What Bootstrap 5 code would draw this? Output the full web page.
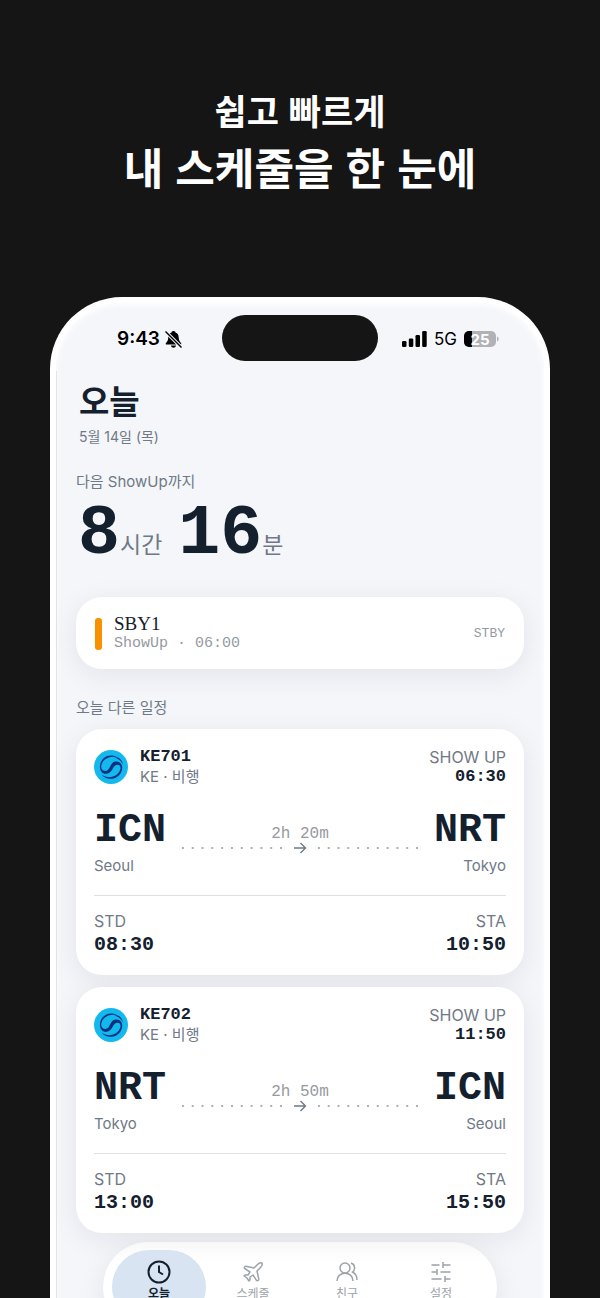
<!DOCTYPE html>
<html lang="ko">
<head>
<meta charset="utf-8">
<meta name="viewport" content="width=device-width, initial-scale=1">
<title>오늘</title>
<link href="https://cdn.jsdelivr.net/npm/bootstrap@5.3.0/dist/css/bootstrap.min.css" rel="stylesheet">
<style>
  :root { --ink: #14202e; --muted: #707986; --faint: #969a9f; }
  body { background: #151515; color: var(--ink); font-family: Inter, "Noto Sans CJK KR", sans-serif; font-size: 15px; line-height: 20px; }
  .stage { height: 100vh; padding-top: 84px; }
  .promo { font-family: "Noto Sans CJK KR", sans-serif; font-weight: 700; margin-bottom: 101px; }
  .promo-top { font-size: 35px; line-height: 52px; }
  .promo-main { font-size: 43px; line-height: 60px; }
  .mono { font-family: "Liberation Mono", monospace; }
  .muted { color: var(--muted); }
  .phone { margin: 0 50px; border: 6px solid #fff; border-bottom: 0; border-radius: 72px 72px 0 0; background: #f4f6fa; box-shadow: inset 0 2px 6px #fff; padding-top: 12px; }
  .status { display: grid; grid-template-columns: 1fr 156px 1fr; align-items: center; color: #000; }
  .island { height: 46px; border-radius: 23px; background: #151515; }
  .clock { font-size: 19px; font-weight: 600; padding: 2px 0 0 61px; gap: 4px; }
  .signal { font-size: 17px; padding: 2px 45px 0 0; gap: 7px; }
  .content { border-left: 1px solid #e0e3e8; padding: 9px 20px 0 19px; margin-top: 10px; }
  .page-title { font-family: "Noto Sans CJK KR", sans-serif; font-size: 33px; line-height: 40px; font-weight: 700; margin: 0 0 7px 3px; }
  .date { font-size: 14px; margin: 0 0 24px 3px; }
  .section-label { font-size: 15px; line-height: 20px; font-weight: 400; margin: 0; padding-top: 1px; }
  .countdown { height: 80px; line-height: 80px; margin: 3px 0 22px 2px; }
  .digits { font-size: 70px; font-weight: 700; }
  .unit { font-size: 23px; }
  .panel { background: #fff; border-radius: 26px; box-shadow: 0 6px 28px rgba(20, 30, 40, .08); }
  .standby { height: 72px; padding: 2px 19px 0; margin-bottom: 28px; }
  .stripe { width: 7px; height: 32px; border-radius: 3px; background: #f79100; margin-right: 12px; }
  .duty { font-family: "Liberation Serif", serif; font-size: 19px; }
  .duty-time { font-size: 15px; color: var(--faint); }
  .duty-tag { font-size: 13px; color: var(--faint); }
  .flights { gap: 12px; margin-top: 11px; }
  .flight { padding: 18px; }
  .flight-no, .show-time { font-size: 17px; font-weight: 700; }
  .caps { font-size: 16px; }
  .route { display: grid; grid-template-columns: 74px 1fr 74px; column-gap: 10px; margin-top: 22px; }
  .airport { font-size: 40px; line-height: 44px; font-weight: 700; }
  .city { margin-top: 3px; }
  .duration { font-size: 16px; line-height: 20px; color: var(--faint); margin-top: 15px; }
  .track { height: 8px; gap: 7px; }
  .dots { height: 2px; background: radial-gradient(circle, #a9afb6 1px, transparent 1px) 0 0 / 10px 2px round; }
  .times { border-top: 1px solid #dfe0e2; margin-top: 19px; padding-top: 15px; }
  .time { font-size: 20px; line-height: 24px; font-weight: 700; margin-top: 2px; }
  .tabs { margin: 9px 27px 0; padding: 8px 9px; border-radius: 46px; height: 90px; }
  .tab { border: 0; background: none; padding: 10px 0 0; height: 74px; border-radius: 37px; color: #9da3aa; font-size: 12px; line-height: 16px; }
  .tab svg { margin-bottom: 2px; }
  .tab.active { background: #d8e4f2; color: var(--ink); font-weight: 700; }
</style>
</head>
<body>
<svg class="d-none">
  <symbol id="airline" viewBox="0 0 34 34">
    <circle cx="17" cy="17" r="17" fill="#12b8ee"/>
    <path d="M6 15.500C7 7 16 2.500 24 7.500C16.500 5 9 8.500 7.400 15C6.500 19 8.800 21 11.500 21C16.500 21 15.500 12.300 21.500 11.600C27.500 11 30 17 27 22.500C23.500 29.500 13 31.500 7.500 24.500C13.500 29 21 27.500 24.800 22.500C28 18 26.500 14.500 23 14.800C18.500 15.300 19 23 12.500 23.800C8 24.200 5.500 20.500 6 15.500ZM24 7.500C27 9 28.500 11.500 28.700 14.500C27.500 11.500 25 8.500 20 7.500Z" fill="#05317f"/>
  </symbol>
  <symbol id="arrow" viewBox="0 0 14 14"><path d="M1 7H12M7.500 2L12.500 7L7.500 12" fill="none" stroke="#707986" stroke-width="1.400"/></symbol>
</svg>
<div class="stage d-flex flex-column overflow-hidden">
  <header class="promo text-center text-white">
    <div class="promo-top">쉽고 빠르게</div>
    <div class="promo-main">내 스케줄을 한 눈에</div>
  </header>
  <div class="phone flex-grow-1">
    <div class="status">
      <div class="clock d-flex align-items-center">9:43
        <svg width="19" height="19" viewBox="0 0 19 19" aria-hidden="true"><path d="M9.500 1C7.800 1 7.600 2 7.600 2.400C4.500 3.500 4.300 6 4.200 8.500C4 11 2.800 12 1.800 13.300V14.400H17.200V13.300C16.200 12 15 11 14.800 8.500C14.700 6 14.500 3.500 11.400 2.400C11.400 2 11.200 1 9.500 1ZM7 15.400C7.300 18.400 11.700 18.400 12 15.400Z"/><path d="M1.500 1.500L17.500 17.500" stroke="#f4f6fb" stroke-width="3.400"/><path d="M1.500 1.500L17.500 17.500" stroke="#000" stroke-width="1.400"/></svg>
      </div>
      <div class="island"></div>
      <div class="signal d-flex align-items-center justify-content-end">
        <svg width="25" height="16" viewBox="0 0 25 16" aria-hidden="true"><rect y="10" width="4.500" height="6" rx="1.300"/><rect x="6.800" y="7.500" width="4.500" height="8.500" rx="1.300"/><rect x="13.500" y="4" width="4.500" height="12" rx="1.300"/><rect x="20.200" width="4.500" height="16" rx="1.300"/></svg>
        <span>5G</span>
        <svg width="35" height="18" viewBox="0 0 35 18" role="img" aria-label="25%"><rect x="0" y="1" width="32" height="16" rx="5" fill="#b1b2b5"/><path d="M8 1H5A5 5 0 0 0 0 6V12A5 5 0 0 0 5 17H8Z"/><path d="M33 6.500C35.300 7.500 35.300 10.500 33 11.500Z" fill="#b1b2b5"/><text x="16" y="14.500" text-anchor="middle" font-family="Inter, sans-serif" font-size="15" font-weight="700" fill="#fff">25</text></svg>
      </div>
    </div>
    <main class="content">
      <h1 class="page-title">오늘</h1>
      <div class="date muted">5월 14일 (목)</div>
      <h2 class="section-label muted">다음 ShowUp까지</h2>
      <div class="countdown text-nowrap"><span class="digits mono">8</span><span class="unit muted me-3">시간</span><span class="digits mono">16</span><span class="unit muted">분</span></div>
      <section class="panel standby d-flex align-items-center">
        <div class="stripe"></div>
        <div class="flex-grow-1"><div class="duty">SBY1</div><div class="duty-time mono">ShowUp · 06:00</div></div>
        <div class="duty-tag mono">STBY</div>
      </section>
      <h2 class="section-label muted">오늘 다른 일정</h2>

      <div class="flights d-flex flex-column">
        <section class="panel flight">
          <div class="d-flex align-items-center">
            <svg width="34" height="34" role="img" aria-label="Korean Air"><use href="#airline"/></svg>
            <div class="flex-grow-1 ms-2 ps-1"><div class="flight-no mono">KE701</div><div class="muted">KE · 비행</div></div>
            <div class="text-end"><div class="caps muted">SHOW UP</div><div class="show-time mono">06:30</div></div>
          </div>
          <div class="route">
            <div><div class="airport mono">ICN</div><div class="city muted">Seoul</div></div>
            <div><div class="duration mono text-center">2h 20m</div><div class="track d-flex align-items-center"><span class="dots flex-grow-1"></span><svg width="14" height="14"><use href="#arrow"/></svg><span class="dots flex-grow-1"></span></div></div>
            <div class="text-end"><div class="airport mono">NRT</div><div class="city muted">Tokyo</div></div>
          </div>
          <div class="times d-flex justify-content-between">
            <div><div class="caps muted">STD</div><div class="time mono">08:30</div></div>
            <div class="text-end"><div class="caps muted">STA</div><div class="time mono">10:50</div></div>
          </div>
        </section>

        <section class="panel flight">
          <div class="d-flex align-items-center">
            <svg width="34" height="34" role="img" aria-label="Korean Air"><use href="#airline"/></svg>
            <div class="flex-grow-1 ms-2 ps-1"><div class="flight-no mono">KE702</div><div class="muted">KE · 비행</div></div>
            <div class="text-end"><div class="caps muted">SHOW UP</div><div class="show-time mono">11:50</div></div>
          </div>
          <div class="route">
            <div><div class="airport mono">NRT</div><div class="city muted">Tokyo</div></div>
            <div><div class="duration mono text-center">2h 50m</div><div class="track d-flex align-items-center"><span class="dots flex-grow-1"></span><svg width="14" height="14"><use href="#arrow"/></svg><span class="dots flex-grow-1"></span></div></div>
            <div class="text-end"><div class="airport mono">ICN</div><div class="city muted">Seoul</div></div>
          </div>
          <div class="times d-flex justify-content-between">
            <div><div class="caps muted">STD</div><div class="time mono">13:00</div></div>
            <div class="text-end"><div class="caps muted">STA</div><div class="time mono">15:50</div></div>
          </div>
        </section>
      </div>

      <nav class="panel tabs d-flex">
        <button type="button" class="tab active flex-fill w-25 d-flex flex-column align-items-center"><svg width="24" height="24" viewBox="0 0 24 24" fill="none" stroke="currentColor" stroke-width="2"><circle cx="12" cy="12" r="10.500"/><path d="M12 5.500V12L16 14.500"/></svg>오늘</button>
        <button type="button" class="tab flex-fill w-25 d-flex flex-column align-items-center"><svg width="24" height="24" viewBox="0 0 24 24" fill="none" stroke="currentColor" stroke-width="1.500" stroke-linejoin="round"><path d="M17.800 19.200L16 11L19.500 7.500C21 6 21.500 4 21 3C20 2.500 18 3 16.500 4.500L13 8L4.800 6.200C4.300 6.100 3.900 6.300 3.700 6.700L3.400 7.200C3.200 7.700 3.300 8.200 3.700 8.500L9 12L7 15H4L3 16L6 18L8 21L9 20V17L12 15L15.500 20.300C15.800 20.700 16.300 20.800 16.800 20.600L17.300 20.400C17.700 20.100 17.900 19.700 17.800 19.200Z"/></svg>스케줄</button>
        <button type="button" class="tab flex-fill w-25 d-flex flex-column align-items-center"><svg width="24" height="24" viewBox="0 0 24 24" fill="none" stroke="currentColor" stroke-width="1.500"><circle cx="10" cy="8" r="5"/><path d="M2 21C2 10.500 18 10.500 18 21M16 3C20.500 4.500 20.500 10 17.500 12C20.500 13.500 22 16.500 22 20"/></svg>친구</button>
        <button type="button" class="tab flex-fill w-25 d-flex flex-column align-items-center"><svg width="24" height="24" viewBox="0 0 24 24" fill="none" stroke="currentColor" stroke-width="1.500"><path d="M2.500 5H10.500M14 5H21.500M14 2V8M2.500 12H8M8 9V15M11.500 12H21.500M2.500 19H12.500M16 19H21.500M16 16V22"/></svg>설정</button>
      </nav>
    </main>
  </div>
</div>
<script src="https://cdn.jsdelivr.net/npm/bootstrap@5.3.0/dist/js/bootstrap.bundle.min.js"></script>
</body>
</html>
